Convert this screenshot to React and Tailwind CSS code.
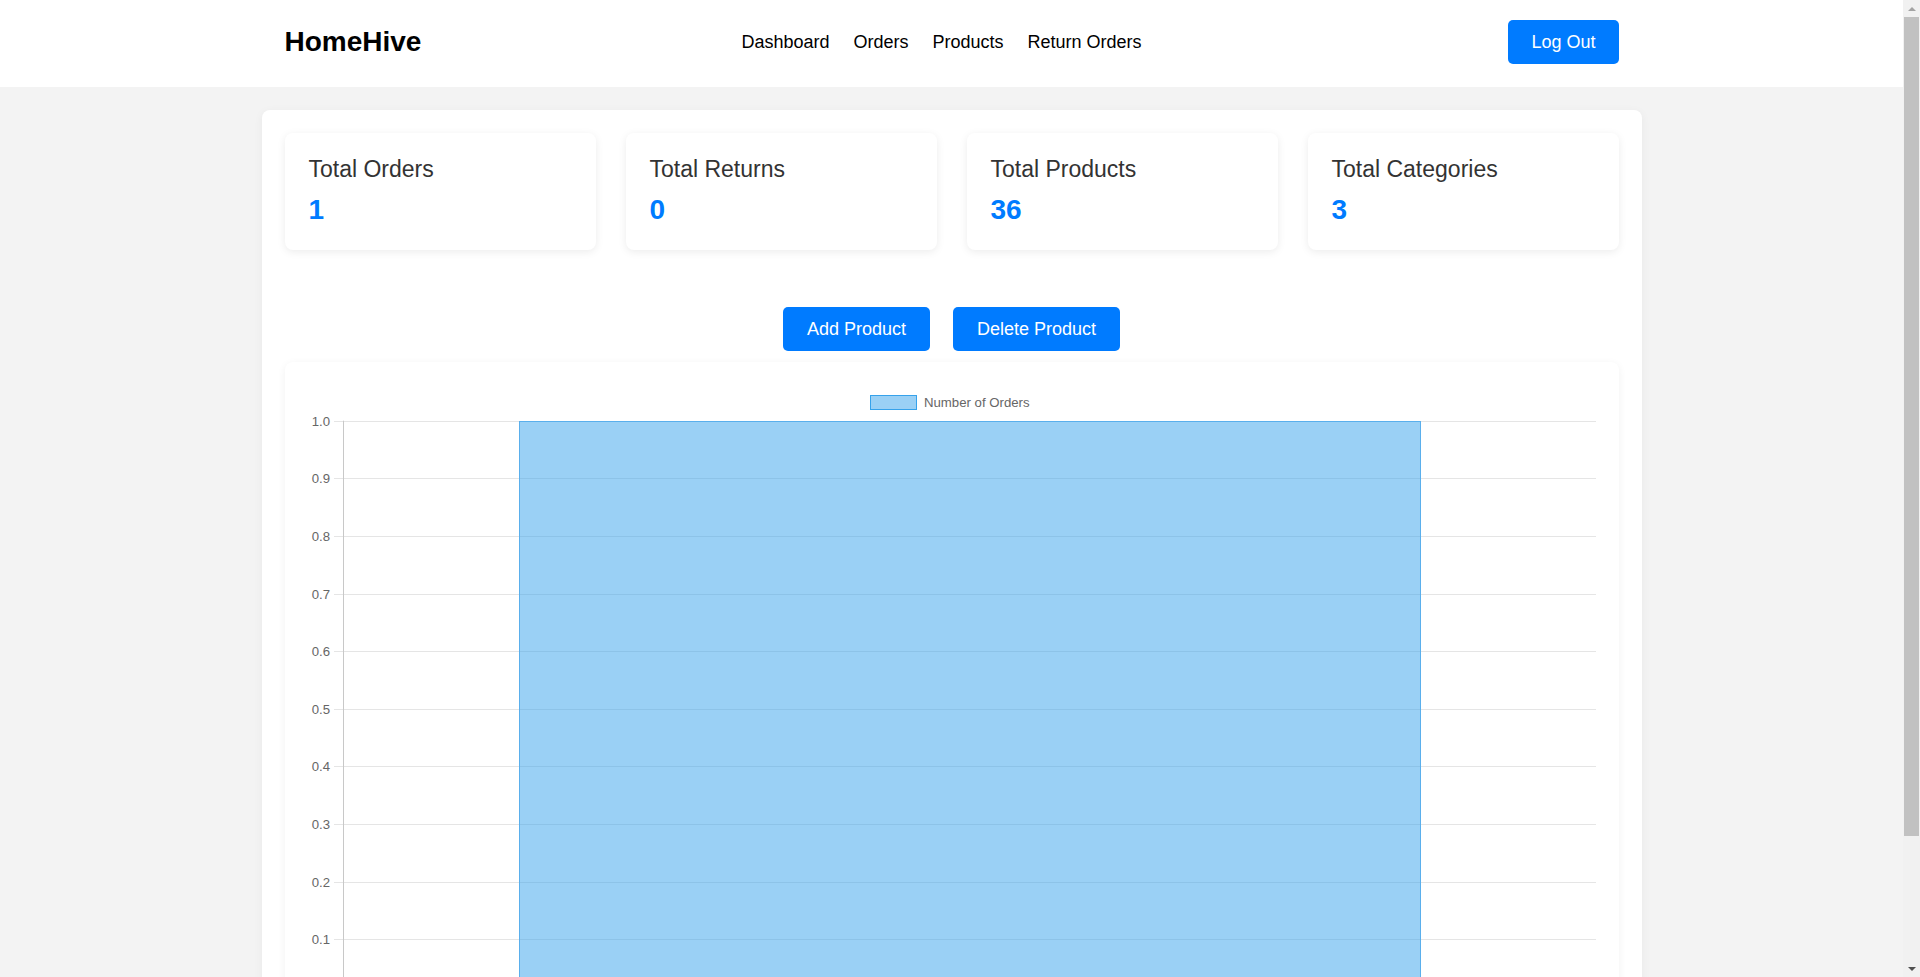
const STATS = [
  { label: 'Total Orders', value: 1 },
  { label: 'Total Returns', value: 0 },
  { label: 'Total Products', value: 36 },
  { label: 'Total Categories', value: 3 },
];

const TICKS = ['1.0', '0.9', '0.8', '0.7', '0.6', '0.5', '0.4', '0.3', '0.2', '0.1', '0.0'];

function Navbar() {
  return (
    <header className="bg-white h-[87px]">
      <div className="w-[1334px] mx-auto h-full grid grid-cols-[1fr_auto_1fr] items-center pt-[20px] pb-[23px]">
        <h1 className="text-[28px] font-bold text-black leading-none">HomeHive</h1>
        <nav className="flex gap-6 text-[18px] text-black mr-[20px]">
          <a href="#">Dashboard</a>
          <a href="#">Orders</a>
          <a href="#">Products</a>
          <a href="#">Return Orders</a>
        </nav>
        <div className="flex justify-end">
          <button className="h-[44px] px-[23px] bg-[#007bff] text-white text-[18px] rounded-[5px]">
            Log Out
          </button>
        </div>
      </div>
    </header>
  );
}

function StatCard({ label, value }) {
  return (
    <div className="bg-white rounded-[8px] shadow-[0_2px_8px_rgba(0,0,0,0.08)] px-6 pt-[23px] h-[117px]">
      <p className="text-[23px] text-[#333] leading-[26px]">{label}</p>
      <p className="text-[28px] font-bold text-[#007bff] leading-[32px] mt-[12px]">{value}</p>
    </div>
  );
}

function OrdersChart() {
  const top = 40.7;
  const step = 57.6;
  return (
    <div className="bg-white rounded-[8px] shadow-[0_2px_8px_rgba(0,0,0,0.06)] px-[20px] pt-[18px] pb-[20px]">
      <svg width="1294" height="680" className="block" style={{ fontFamily: '"Liberation Sans", Arial, sans-serif' }}>
        <rect x="565.5" y="15.5" width="46" height="14" fill="rgba(54,162,235,0.5)" stroke="#36a2eb" strokeWidth="1" />
        <text x="619" y="27" fontSize="13.2" fill="#666">Number of Orders</text>
        {TICKS.map((t, i) => {
          const y = Math.round(top + i * step) + 0.5;
          return (
            <g key={t}>
              <line x1="29" x2="1291" y1={y} y2={y} stroke="#e5e5e5" strokeWidth="1" />
              <text x="25" y={y + 4.5} fontSize="13.2" fill="#666" textAnchor="end">{t}</text>
            </g>
          );
        })}
        <line x1="38.5" x2="38.5" y1={top} y2={top + 10 * step} stroke="#c8c8c8" strokeWidth="1" />
        <rect
          x="214.5"
          y={Math.round(top) + 0.5}
          width="901"
          height={10 * step}
          fill="rgba(54,162,235,0.5)"
          stroke="#5aafec"
          strokeWidth="1"
        />
        <text x="665" y={top + 10 * step + 22} fontSize="13.2" fill="#666" textAnchor="middle">Orders</text>
      </svg>
    </div>
  );
}

// the window's scrollbar, as it shows in the screenshot
function Scrollbar() {
  return (
    <div className="w-[17px] h-[977px] shrink-0 bg-[#f1f1f1] flex flex-col items-center">
      <div className="h-[17px] flex items-center justify-center">
        <div className="w-0 h-0 border-x-[4px] border-x-transparent border-b-[4px] border-b-[#a3a3a3]" />
      </div>
      <div className="w-[15px] h-[819px] bg-[#c1c1c1]" />
      <div className="flex-1" />
      <div className="h-[17px] flex items-center justify-center">
        <div className="w-0 h-0 border-x-[4px] border-x-transparent border-t-[4px] border-t-[#505050]" />
      </div>
    </div>
  );
}

export default function App() {
  return (
    <div className="flex items-start bg-[#f3f3f3]" style={{ fontFamily: '"Liberation Sans", Arial, sans-serif' }}>
      <div className="flex-1 min-h-screen pb-10">
        <Navbar />
        <main className="w-[1380px] mx-auto mt-[23px] bg-white rounded-[8px] shadow-[0_2px_10px_rgba(0,0,0,0.05)] p-[23px]">
          <div className="grid grid-cols-4 gap-[30px]">
            {STATS.map(s => <StatCard key={s.label} {...s} />)}
          </div>

          <div className="flex justify-center gap-[23px] mt-[57px] mb-[11px]">
            <button className="h-[44px] px-6 bg-[#007bff] text-white text-[18px] rounded-[5px]">Add Product</button>
            <button className="h-[44px] px-6 bg-[#007bff] text-white text-[18px] rounded-[5px]">Delete Product</button>
          </div>

          <OrdersChart />
        </main>
      </div>
      <Scrollbar />
    </div>
  );
}
